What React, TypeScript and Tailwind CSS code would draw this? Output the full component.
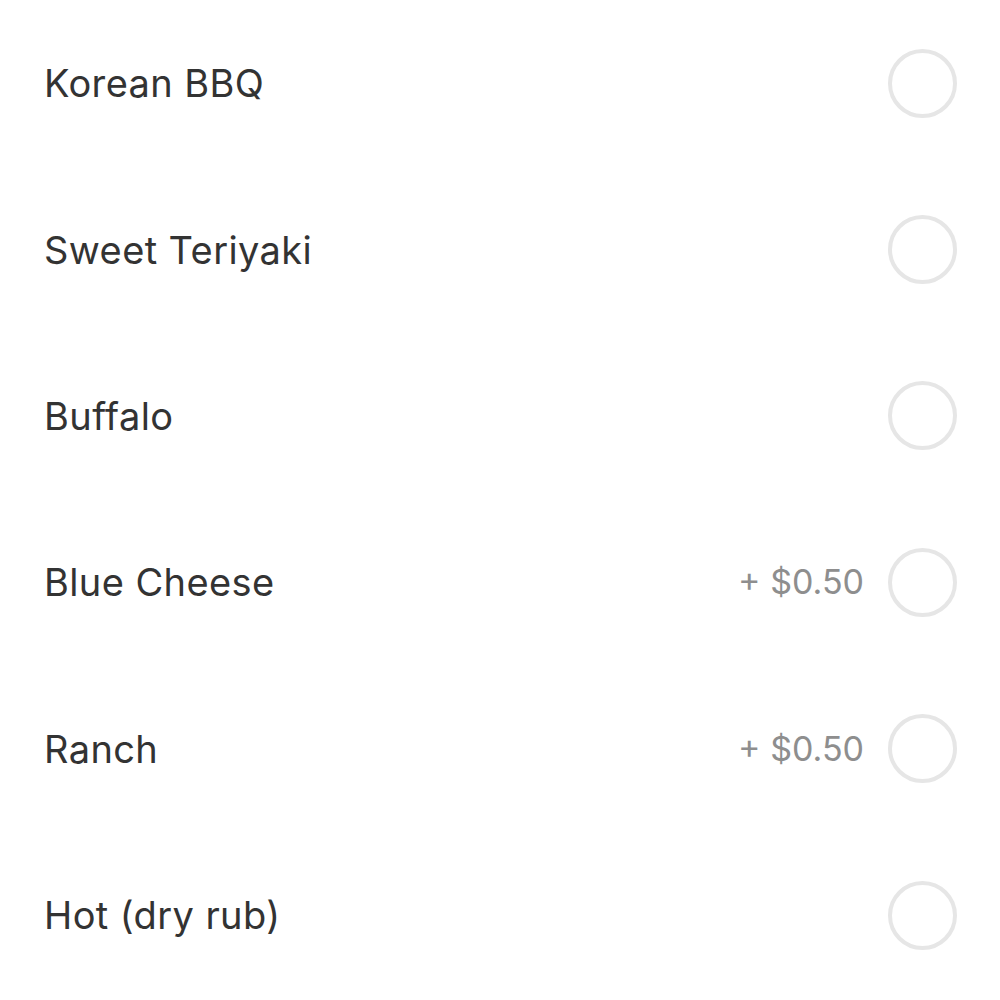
import React from 'react';

interface SauceOption {
  name: string;
  price?: string;
}

const options: SauceOption[] = [
  { name: 'Korean BBQ' },
  { name: 'Sweet Teriyaki' },
  { name: 'Buffalo' },
  { name: 'Blue Cheese', price: '+ $0.50' },
  { name: 'Ranch', price: '+ $0.50' },
  { name: 'Hot (dry rub)' },
];

const OptionRow: React.FC<{ option: SauceOption }> = ({ option }) => (
  <div className="flex h-[166.4px] items-center pl-[44px] pr-[43px]">
    <span className="flex-1 text-[38px] leading-none tracking-[0.4px] text-[#333333]">{option.name}</span>
    {option.price && (
      <span className="mr-[24px] text-[34px] leading-none text-[#8e8e8e]">{option.price}</span>
    )}
    <div className="h-[69px] w-[69px] rounded-full border-[4px] border-[#e6e6e6]" />
  </div>
);

export default function App() {
  return (
    <div className="h-[1000px] w-[1000px] bg-white font-['Inter','Liberation_Sans',sans-serif]">
      {options.map((option) => (
        <OptionRow key={option.name} option={option} />
      ))}
    </div>
  );
}
